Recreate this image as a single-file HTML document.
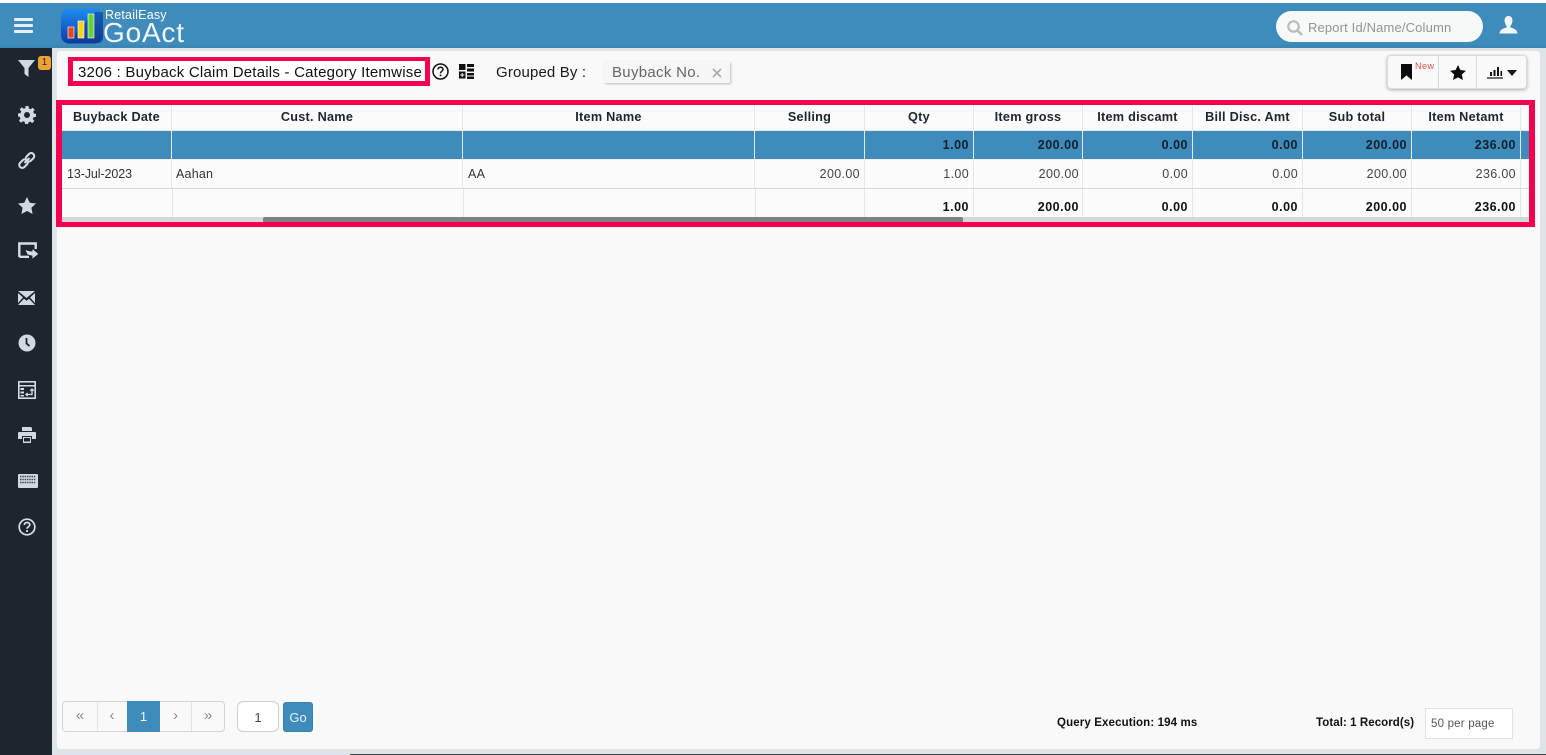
<!DOCTYPE html>
<html><head><meta charset="utf-8">
<style>
*{box-sizing:border-box}
html,body{margin:0;padding:0}
body{width:1546px;height:755px;overflow:hidden;position:relative;background:#dfe4ea;font-family:"Liberation Sans",sans-serif;color:#111}
.a{position:absolute}
.t{position:absolute;white-space:nowrap}
.cell{position:absolute;font-size:12.5px;line-height:16px;white-space:nowrap;letter-spacing:.35px}
.h{font-weight:bold;text-align:center;color:#1c2530;letter-spacing:.25px;font-size:12.7px}
.r{text-align:right}
.b{font-weight:bold;letter-spacing:.5px}
.vl{position:absolute;width:1px}
</style></head><body>
<div class="a" style="left:0;top:0;width:1546px;height:3px;background:#fff"></div>
<div class="a" style="left:0;top:3px;width:1546px;height:45px;background:#3e8bbc"></div>
<div class="a" style="left:0;top:45px;width:1546px;height:3px;background:#3a86b6"></div>
<div class="a" style="left:0;top:48px;width:52px;height:707px;background:#1c262e"></div>
<div class="a" style="left:52px;top:48px;width:1494px;height:707px;background:#dfe4ea"></div>
<div class="a" style="left:57px;top:51px;width:1483px;height:698px;background:#f9f9f9;border-radius:3px"></div>
<div class="a" style="left:350px;top:754px;width:1196px;height:1px;background:#444"></div>

<!-- hamburger -->
<svg class="a" style="left:14px;top:18px" width="20" height="15"><g fill="#e6edf3"><rect width="19" height="3" y="0" rx="1"/><rect width="19" height="3" y="6" rx="1"/><rect width="19" height="3" y="12" rx="1"/></g></svg>

<!-- logo -->
<svg class="a" style="left:61px;top:8px" width="44" height="36" viewBox="0 0 44 36">
<defs><linearGradient id="g" x1="0" y1="0" x2="0" y2="1"><stop offset="0" stop-color="#1f8cf0"/><stop offset="1" stop-color="#0c3aa8"/></linearGradient></defs>
<rect width="42" height="35" y="0.5" rx="8" fill="url(#g)"/>
<path d="M34 4h8v28q-1 3-6 3H22L8 33z" fill="#123a86" opacity=".55"/>
<rect x="7" y="19" width="6" height="11" fill="#e8491c" stroke="#fff" stroke-width=".6"/>
<rect x="17" y="13" width="6" height="17" fill="#f7d21c" stroke="#fff" stroke-width=".6"/>
<rect x="27" y="6" width="6" height="24" fill="#69d13b" stroke="#fff" stroke-width=".6"/>
</svg>
<div class="t" style="left:105px;top:8px;font-size:12.5px;line-height:14px;color:#fff;letter-spacing:.2px">RetailEasy</div>
<div class="t" style="left:103px;top:19px;font-size:28px;line-height:28px;color:#f2f7fb;letter-spacing:.8px">GoAct</div>

<!-- search -->
<div class="a" style="left:1276px;top:11px;width:207px;height:31px;background:#f7f8f8;border-radius:16px"></div>
<svg class="a" style="left:1286px;top:19px" width="18" height="18" viewBox="0 0 18 18"><circle cx="7.5" cy="7.5" r="5.2" fill="none" stroke="#b9bdbf" stroke-width="2.2"/><path d="M11.5 11.5L16 16" stroke="#b9bdbf" stroke-width="2.6"/></svg>
<div class="t" style="left:1308px;top:19px;font-size:13px;line-height:17px;color:#8f9498;letter-spacing:.15px">Report Id/Name/Column</div>
<svg class="a" style="left:1499px;top:16px" width="19" height="18" viewBox="0 0 19 18"><path d="M9.5 0C6.6 0 5.4 2.2 5.6 5c.2 2.4 1 4 2 5v1.4C5 12.5.8 13 .5 17.5h18c-.3-4.500-4.500-5-7.100-6.100V10c1-1 1.800-2.600 2-5 .2-2.800-1-5-3.900-5z" fill="#f4f7f9"/></svg>

<!-- sidebar icons -->
<svg class="a" style="left:17px;top:59px" width="20" height="19" viewBox="0 0 20 19"><path d="M1 1h17l-6.500 8v9l-4-3V9z" fill="#cfd9e0"/></svg>
<div class="a" style="left:38px;top:56px;width:13px;height:14px;background:#eea236;border-radius:3px;font-size:10px;line-height:14px;text-align:center;color:#33261a">1</div>
<svg class="a" style="left:18px;top:106px" width="18" height="18" viewBox="0 0 18 18"><path d="M7.500 0h3l.4 2.500 1.700.7 2-1.500 2.100 2.100-1.500 2 .7 1.700 2.100.4v3l-2.500.4-.7 1.700 1.500 2-2.100 2.100-2-1.500-1.700.7-.4 2.100h-3l-.4-2.500-1.700-.7-2 1.500-2.100-2.100 1.500-2-.7-1.700L0 10.500v-3l2.500-.4.700-1.700-1.500-2 2.100-2.100 2 1.500 1.700-.7z" fill="#cfd9e0"/><circle cx="9" cy="9" r="3" fill="#1c262e"/></svg>
<svg class="a" style="left:17px;top:151px" width="20" height="20" viewBox="0 0 20 20"><g fill="none" stroke="#d4dde3" stroke-width="2.100"><rect x="8.200" y="3.300" width="9.500" height="6" rx="3" transform="rotate(-45 13 6.300)"/><rect x="1.800" y="9.700" width="9.500" height="6" rx="3" transform="rotate(-45 6.500 12.700)"/><path d="M7.500 12l5-5"/></g></svg>
<svg class="a" style="left:18px;top:197px" width="18" height="17" viewBox="0 0 18 17"><path d="M9 0l2.700 5.700 6.300.8-4.600 4.300 1.200 6.200L9 14l-5.600 3 1.200-6.200L0 6.500l6.300-.8z" fill="#cfd9e0"/></svg>
<svg class="a" style="left:18px;top:242px" width="22" height="19" viewBox="0 0 22 19"><path d="M1.300 15V1.500H17.700V7M1.300 14.800H11" fill="none" stroke="#d4dde3" stroke-width="2.400"/><path d="M6.500 6.500C9 8.500 11 9 14 9V6L21 12 14 17.500V14C12 14 10.500 13.500 9 12.500z" fill="#d4dde3" stroke="#1c262e" stroke-width=".9"/></svg>
<svg class="a" style="left:18px;top:291px" width="17" height="14" viewBox="0 0 17 14"><path d="M0 0h17L8.500 7z M0 2l5 4.500L0 12z M17 2l-5 4.500 5 5.500z M0 14l6-6.300 2.500 2 2.500-2 6 6.300z" fill="#cfd9e0"/></svg>
<svg class="a" style="left:18px;top:334px" width="18" height="18" viewBox="0 0 18 18"><circle cx="9" cy="9" r="8.500" fill="#cfd9e0"/><path d="M8.500 4v5.500l3 2.500" fill="none" stroke="#1c262e" stroke-width="1.800"/></svg>
<svg class="a" style="left:18px;top:381px" width="18" height="18" viewBox="0 0 18 18"><rect x=".8" y=".8" width="16.400" height="16.400" fill="none" stroke="#d4dde3" stroke-width="1.600"/><path d="M1 4h16v1.500H1zM2.500 7h3.500v2H2.500zM2.500 10.500h3.500v2H2.500zM2.500 14h3.500v1.500H2.500z" fill="#d4dde3"/><path d="M8 13.500h6V8M12.200 9.800L14 8l1.800 1.800M9.600 15L8 13.500 9.600 12" fill="none" stroke="#d4dde3" stroke-width="1.300"/></svg>
<svg class="a" style="left:18px;top:427px" width="18" height="16" viewBox="0 0 18 16"><path d="M4 0h9l1 1v3H4z" fill="#cfd9e0"/><path d="M1 5h16a1 1 0 0 1 1 1v6h-4V9H4v3H0V6a1 1 0 0 1 1-1z" fill="#cfd9e0"/><rect x="5" y="10" width="8" height="6" fill="#cfd9e0"/><rect x="6" y="11" width="6" height="3.500" fill="#1c262e"/></svg>
<svg class="a" style="left:18px;top:474px" width="20" height="14" viewBox="0 0 20 14"><rect width="20" height="14" rx="1" fill="#cfd9e0"/><g fill="#1c262e" opacity=".8"><path d="M2 2.500h16" stroke="#1c262e" stroke-width="1.400" stroke-dasharray="1.500 .8"/><path d="M2 5.500h16" stroke="#1c262e" stroke-width="1.400" stroke-dasharray="1.500 .8"/><path d="M2 8.500h16" stroke="#1c262e" stroke-width="1.400" stroke-dasharray="1.500 .8"/></g></svg>
<svg class="a" style="left:18px;top:518px" width="18" height="18" viewBox="0 0 18 18"><circle cx="9" cy="9" r="7.800" fill="none" stroke="#d4dde3" stroke-width="1.700"/><path d="M6.300 7c0-1.600 1.200-2.500 2.800-2.500s2.700.9 2.700 2.300c0 2-2.800 2-2.800 4" fill="none" stroke="#d4dde3" stroke-width="1.700"/><rect x="8.100" y="12.100" width="1.900" height="1.900" fill="#d4dde3"/></svg>

<!-- title -->
<div class="a" style="left:68px;top:57px;width:362px;height:29px;background:#fff;border:solid #f5004e;border-width:4px 5px 5px 5px"></div>
<div class="t" style="left:78px;top:63px;font-size:15px;line-height:19px;color:#111;letter-spacing:.22px">3206 : Buyback Claim Details - Category Itemwise</div>
<svg class="a" style="left:432px;top:63px" width="17" height="17" viewBox="0 0 17 17"><circle cx="8.500" cy="8.500" r="7.500" fill="none" stroke="#111" stroke-width="1.500"/><path d="M6 6.500c0-1.500 1.100-2.300 2.500-2.300s2.500.8 2.500 2.200c0 1.900-2.500 1.900-2.500 3.800" fill="none" stroke="#111" stroke-width="1.500"/><rect x="7.700" y="11.500" width="1.700" height="1.700" fill="#111"/></svg>
<svg class="a" style="left:459px;top:64px" width="15" height="15" viewBox="0 0 15 15"><rect x="0" y="0" width="6.500" height="6" fill="#111"/><rect x="0" y="7.500" width="6.500" height="7" fill="#111"/><path d="M8 0h7v3H8zM8 4.500h7v3H8zM8 9h7v2.500H8zM8 12.500h7V15H8z" fill="#111"/><path d="M3.200 9v4M1.300 11h4" stroke="#fff" stroke-width="1"/></svg>
<div class="t" style="left:496px;top:63px;font-size:15px;line-height:19px;color:#1a1a1a;letter-spacing:.15px">Grouped By :</div>
<div class="a" style="left:604px;top:62px;width:126px;height:21px;background:#f6f6f6;box-shadow:1px 1px 2px #bbb"></div>
<div class="t" style="left:612px;top:63px;font-size:15px;line-height:19px;color:#666;letter-spacing:.3px">Buyback No.</div>
<svg class="a" style="left:712px;top:68px" width="10" height="10" viewBox="0 0 10 10"><path d="M1 1l8 8M9 1l-8 8" stroke="#aaa" stroke-width="1.600"/></svg>

<!-- right buttons -->
<div class="a" style="left:1387px;top:55px;width:140px;height:34px;background:#f9f9f9;border:1px solid #dcdcdc;border-radius:4px;box-shadow:0 1px 3px #aaa"></div>
<div class="vl" style="left:1438px;top:56px;height:32px;background:#d8d8d8"></div>
<div class="vl" style="left:1476px;top:56px;height:32px;background:#d8d8d8"></div>
<svg class="a" style="left:1401px;top:64px" width="12" height="16" viewBox="0 0 12 16"><path d="M0 0h11v16L5.500 11.500 0 16z" fill="#0b0b0b"/></svg>
<div class="t" style="left:1415px;top:60px;font-size:9px;line-height:12px;color:#d9534f;letter-spacing:.5px">New</div>
<svg class="a" style="left:1450px;top:65px" width="16" height="15" viewBox="0 0 18 17"><path d="M9 0l2.700 5.700 6.300.8-4.600 4.300 1.200 6.200L9 14l-5.600 3 1.200-6.200L0 6.500l6.300-.8z" fill="#0b0b0b"/></svg>
<svg class="a" style="left:1487px;top:65px" width="17" height="14" viewBox="0 0 17 14"><path d="M0 13h16" stroke="#111" stroke-width="1.200"/><path d="M3 7h2v4H3zM6.500 5h2v6h-2zM10 2h2v9h-2zM13.500 6h1.500v5h-1.500z" fill="#111"/></svg>
<svg class="a" style="left:1507px;top:70px" width="10" height="6" viewBox="0 0 10 6"><path d="M0 0h10L5 6z" fill="#111"/></svg>

<!-- table area -->
<div class="a" style="left:62px;top:105px;width:1467px;height:117px;background:#fbfbfb"></div>
<div class="a" style="left:62px;top:131px;width:1467px;height:28px;background:#3e8bbc"></div>
<div class="a" style="left:62px;top:188px;width:1467px;height:1px;background:#d8d8d8"></div>
<div class="a" style="left:62px;top:130px;width:1467px;height:1px;background:#e3e9ee"></div>
<div class="a" style="left:62px;top:159px;width:1467px;height:1px;background:#eef1f3"></div>

<!-- column lines -->
<div class="vl" style="left:171px;top:105px;height:83px;background:#e4e8eb"></div>
<div class="vl" style="left:462px;top:105px;height:83px;background:#e4e8eb"></div>
<div class="vl" style="left:754px;top:105px;height:83px;background:#e4e8eb"></div>
<div class="vl" style="left:864px;top:105px;height:83px;background:#e4e8eb"></div>
<div class="vl" style="left:973px;top:105px;height:83px;background:#e4e8eb"></div>
<div class="vl" style="left:1082px;top:105px;height:83px;background:#e4e8eb"></div>
<div class="vl" style="left:1192px;top:105px;height:83px;background:#e4e8eb"></div>
<div class="vl" style="left:1302px;top:105px;height:83px;background:#e4e8eb"></div>
<div class="vl" style="left:1411px;top:105px;height:83px;background:#e4e8eb"></div>
<div class="vl" style="left:1520px;top:105px;height:83px;background:#e4e8eb"></div>
<div class="vl" style="left:172px;top:189px;height:33px;background:#e4e4e4"></div>
<div class="vl" style="left:463px;top:189px;height:33px;background:#e4e4e4"></div>
<div class="vl" style="left:755px;top:189px;height:33px;background:#e4e4e4"></div>
<div class="vl" style="left:864px;top:189px;height:33px;background:#e4e4e4"></div>
<div class="vl" style="left:973px;top:189px;height:33px;background:#e4e4e4"></div>
<div class="vl" style="left:1082px;top:189px;height:33px;background:#e4e4e4"></div>
<div class="vl" style="left:1192px;top:189px;height:33px;background:#e4e4e4"></div>
<div class="vl" style="left:1302px;top:189px;height:33px;background:#e4e4e4"></div>
<div class="vl" style="left:1411px;top:189px;height:33px;background:#e4e4e4"></div>
<div class="vl" style="left:1520px;top:189px;height:33px;background:#e4e4e4"></div>

<!-- headers -->
<div class="cell h" style="left:62px;top:109px;width:109px">Buyback Date</div>
<div class="cell h" style="left:172px;top:109px;width:290px">Cust. Name</div>
<div class="cell h" style="left:463px;top:109px;width:291px">Item Name</div>
<div class="cell h" style="left:755px;top:109px;width:109px">Selling</div>
<div class="cell h" style="left:865px;top:109px;width:108px">Qty</div>
<div class="cell h" style="left:974px;top:109px;width:108px">Item gross</div>
<div class="cell h" style="left:1083px;top:109px;width:109px">Item discamt</div>
<div class="cell h" style="left:1193px;top:109px;width:109px">Bill Disc. Amt</div>
<div class="cell h" style="left:1303px;top:109px;width:108px">Sub total</div>
<div class="cell h" style="left:1412px;top:109px;width:108px">Item Netamt</div>

<!-- blue row -->
<div class="cell r b" style="left:865px;top:137px;width:104px;color:#10202c">1.00</div>
<div class="cell r b" style="left:974px;top:137px;width:105px;color:#10202c">200.00</div>
<div class="cell r b" style="left:1083px;top:137px;width:105px;color:#10202c">0.00</div>
<div class="cell r b" style="left:1193px;top:137px;width:105px;color:#10202c">0.00</div>
<div class="cell r b" style="left:1303px;top:137px;width:104px;color:#10202c">200.00</div>
<div class="cell r b" style="left:1412px;top:137px;width:104px;color:#10202c">236.00</div>

<!-- data row -->
<div class="cell" style="left:67px;top:166px;color:#333;letter-spacing:-.1px">13-Jul-2023</div>
<div class="cell" style="left:176px;top:166px;color:#333;letter-spacing:.2px">Aahan</div>
<div class="cell" style="left:468px;top:166px;color:#333">AA</div>
<div class="cell r" style="left:755px;top:166px;width:105px;color:#444">200.00</div>
<div class="cell r" style="left:865px;top:166px;width:104px;color:#444">1.00</div>
<div class="cell r" style="left:974px;top:166px;width:105px;color:#444">200.00</div>
<div class="cell r" style="left:1083px;top:166px;width:105px;color:#444">0.00</div>
<div class="cell r" style="left:1193px;top:166px;width:105px;color:#444">0.00</div>
<div class="cell r" style="left:1303px;top:166px;width:104px;color:#444">200.00</div>
<div class="cell r" style="left:1412px;top:166px;width:104px;color:#444">236.00</div>

<!-- total row -->
<div class="cell r b" style="left:865px;top:199px;width:104px">1.00</div>
<div class="cell r b" style="left:974px;top:199px;width:105px">200.00</div>
<div class="cell r b" style="left:1083px;top:199px;width:105px">0.00</div>
<div class="cell r b" style="left:1193px;top:199px;width:105px">0.00</div>
<div class="cell r b" style="left:1303px;top:199px;width:104px">200.00</div>
<div class="cell r b" style="left:1412px;top:199px;width:104px">236.00</div>

<!-- scrollbar -->
<div class="a" style="left:62px;top:217px;width:1467px;height:5px;background:#d4d7d9"></div>
<div class="a" style="left:263px;top:217px;width:700px;height:5px;background:#7d8285;border-radius:2px 2px 0 0"></div>

<!-- red box -->
<div class="a" style="left:56px;top:100px;width:1479px;height:127px;border:solid #f5004e;border-width:5px 6px 5px 6px"></div>

<!-- pagination -->
<div class="a" style="left:62px;top:701px;width:163px;height:31px;background:#f9f9f9;border:1px solid #d4d4d4;border-radius:4px"></div>
<div class="vl" style="left:97px;top:702px;height:29px;background:#e2e2e2"></div>
<div class="vl" style="left:191px;top:702px;height:29px;background:#e2e2e2"></div>
<div class="a" style="left:127px;top:701px;width:33px;height:31px;background:#3e8bbc"></div>
<div class="t" style="left:62px;top:707px;width:36px;text-align:center;font-size:15px;line-height:17px;color:#888">«</div>
<div class="t" style="left:97px;top:707px;width:30px;text-align:center;font-size:15px;line-height:17px;color:#888">‹</div>
<div class="t" style="left:127px;top:708px;width:33px;text-align:center;font-size:13px;line-height:17px;color:#f2f7fa">1</div>
<div class="t" style="left:160px;top:707px;width:31px;text-align:center;font-size:15px;line-height:17px;color:#888">›</div>
<div class="t" style="left:191px;top:707px;width:34px;text-align:center;font-size:15px;line-height:17px;color:#888">»</div>
<div class="a" style="left:237px;top:701px;width:42px;height:31px;background:#fff;border:1px solid #cfcfcf;border-radius:6px"></div>
<div class="t" style="left:237px;top:709px;width:42px;text-align:center;font-size:13px;line-height:17px;color:#444">1</div>
<div class="a" style="left:283px;top:702px;width:30px;height:30px;background:#3e8bbc;border:1px solid #3a80ad;border-radius:3px"></div>
<div class="t" style="left:283px;top:709px;width:30px;text-align:center;font-size:13px;line-height:17px;color:#eaf3f8">Go</div>

<!-- footer -->
<div class="t" style="left:1057px;top:715px;font-size:11.500px;line-height:16px;font-weight:bold;color:#111;letter-spacing:.13px">Query Execution: 194 ms</div>
<div class="t" style="left:1316px;top:715px;font-size:11.500px;line-height:16px;font-weight:bold;color:#111;letter-spacing:.07px">Total: 1 Record(s)</div>
<div class="a" style="left:1425px;top:708px;width:88px;height:31px;background:#fff;border:1px solid #e2e2e2"></div>
<div class="t" style="left:1431px;top:716px;font-size:11.500px;line-height:16px;color:#555;letter-spacing:.2px">50 per page</div>
</body></html>
